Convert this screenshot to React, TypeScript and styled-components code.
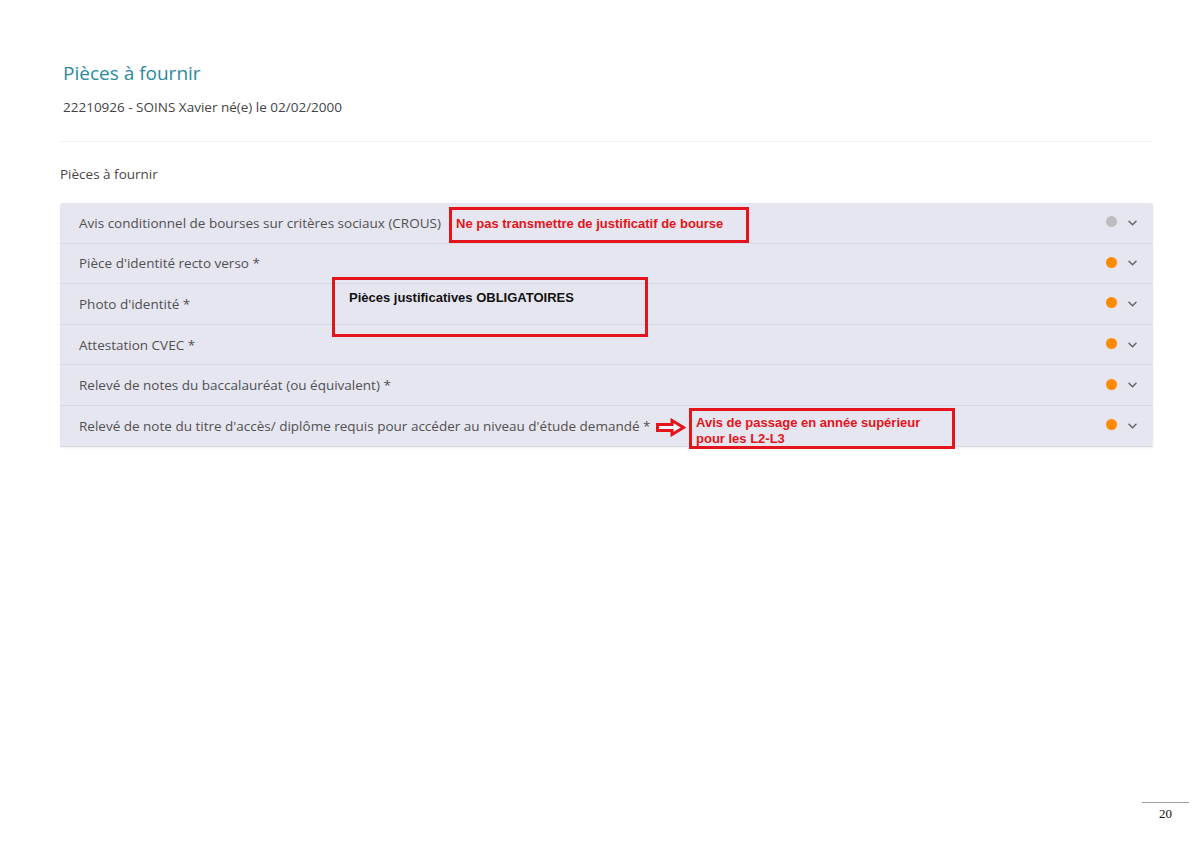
import styled, { createGlobalStyle } from 'styled-components';

const GlobalStyle = createGlobalStyle`
  html, body {
    margin: 0;
    padding: 0;
    background: #ffffff;
  }
  body {
    font-family: "Open Sans", "Noto Sans", sans-serif;
  }
`;

type Piece = { label: string; status: 'pending' | 'todo' };

const pieces: Piece[] = [
  { label: 'Avis conditionnel de bourses sur critères sociaux (CROUS)', status: 'pending' },
  { label: "Pièce d'identité recto verso *", status: 'todo' },
  { label: "Photo d'identité *", status: 'todo' },
  { label: 'Attestation CVEC *', status: 'todo' },
  { label: 'Relevé de notes du baccalauréat (ou équivalent) *', status: 'todo' },
  {
    label: "Relevé de note du titre d'accès/ diplôme requis pour accéder au niveau d'étude demandé *",
    status: 'todo',
  },
];

const Chevron = () => (
  <svg width="9" height="6" viewBox="0 0 9 6">
    <path d="M1 1.2l3.5 3.5 3.5-3.5" fill="none" stroke="#666" strokeWidth="1.5" strokeLinecap="round" strokeLinejoin="round" />
  </svg>
);

const Arrow = () => (
  <svg width="31" height="19" viewBox="0 0 31 19">
    <path
      d="M2.5 6.5h14.5V2.5l11.5 7-11.5 7v-4H2.5z"
      fill="#f4f4fa"
      stroke="#e3141c"
      strokeWidth="3"
      strokeLinejoin="miter"
    />
  </svg>
);

export default function App() {
  return (
    <Page>
      <GlobalStyle />
      <Content>
        <Title>Pièces à fournir</Title>
        <Subtitle>22210926 - SOINS Xavier né(e) le 02/02/2000</Subtitle>
        <Divider />
        <SectionLabel>Pièces à fournir</SectionLabel>
        <Panel>
          {pieces.map((p) => (
            <Row key={p.label}>
              <RowLabel>{p.label}</RowLabel>
              <RowEnd>
                <Dot $status={p.status} />
                <Chevron />
              </RowEnd>
            </Row>
          ))}

          <Note $x={389} $y={4} $w={300} $h={36} $pad="6px 0 0 4px" $tone="red">
            Ne pas transmettre de justificatif de bourse
          </Note>
          <Note $x={272} $y={74} $w={316} $h={60} $pad="10px 0 0 14px" $tone="black">
            Pièces justificatives OBLIGATOIRES
          </Note>
          <ArrowSpot>
            <Arrow />
          </ArrowSpot>
          <Note $x={629} $y={205} $w={266} $h={41} $pad="4px 0 0 4px" $tone="red">
            Avis de passage en année supérieur
            <br />
            pour les L2-L3
          </Note>
        </Panel>
      </Content>
      <Footer>
        <PageNumber>20</PageNumber>
      </Footer>
    </Page>
  );
}

const Page = styled.div`
  min-height: 848px;
  display: flex;
  flex-direction: column;
  box-sizing: border-box;
`;

const Content = styled.div`
  padding: 58px 47px 0 60px;
  display: flex;
  flex-direction: column;
`;

const Title = styled.h1`
  margin: 0 0 0 3px;
  font-size: 19px;
  line-height: 30px;
  font-weight: 400;
  color: #2b8a9e;
`;

const Subtitle = styled.div`
  margin: 9px 0 0 3px;
  font-size: 13.5px;
  line-height: 20px;
  color: #444444;
`;

const Divider = styled.div`
  margin-top: 24px;
  height: 1px;
  background: #f2f2f2;
`;

const SectionLabel = styled.div`
  margin-top: 22px;
  font-size: 13.5px;
  line-height: 20px;
  color: #464646;
`;

const Panel = styled.div`
  position: relative;
  margin-top: 19px;
  background: #e6e6f0;
  border-radius: 3px;
  box-shadow: 0 1px 2px rgba(0, 0, 0, 0.08);
`;

const Row = styled.div`
  display: flex;
  align-items: center;
  justify-content: space-between;
  height: 39.6px;
  padding: 0 16px 0 19px;
  border-bottom: 1px solid #d9d9e3;
  &:last-of-type {
    border-bottom: 2px solid #dcdce6;
  }
`;

const RowLabel = styled.span`
  font-size: 13.5px;
  color: #505050;
`;

const RowEnd = styled.div`
  display: flex;
  align-items: center;
  gap: 11px;
`;

const Dot = styled.span<{ $status: 'pending' | 'todo' }>`
  width: 11px;
  height: 11px;
  border-radius: 50%;
  margin-top: -2px;
  background: ${(p) => (p.$status === 'pending' ? '#bdbdbd' : '#ff8a00')};
`;

const Note = styled.div<{
  $x: number;
  $y: number;
  $w: number;
  $h: number;
  $pad: string;
  $tone: 'red' | 'black';
}>`
  position: absolute;
  left: ${(p) => p.$x}px;
  top: ${(p) => p.$y}px;
  width: ${(p) => p.$w}px;
  height: ${(p) => p.$h}px;
  box-sizing: border-box;
  border: 3px solid #e3141c;
  padding: ${(p) => p.$pad};
  font-family: "Liberation Sans", Arial, sans-serif;
  font-weight: 700;
  font-size: 13px;
  line-height: 16px;
  color: ${(p) => (p.$tone === 'red' ? '#e3141c' : '#111111')};
`;

const ArrowSpot = styled.div`
  position: absolute;
  left: 595px;
  top: 215px;
  line-height: 0;
`;

const Footer = styled.div`
  margin-top: auto;
  display: flex;
  justify-content: flex-end;
  padding: 0 11px 26px 0;
`;

const PageNumber = styled.div`
  width: 47px;
  border-top: 1px solid #a0a0a0;
  padding-top: 3px;
  text-align: center;
  font-family: "Liberation Serif", "Times New Roman", serif;
  font-size: 13px;
  line-height: 16px;
  color: #111;
`;
